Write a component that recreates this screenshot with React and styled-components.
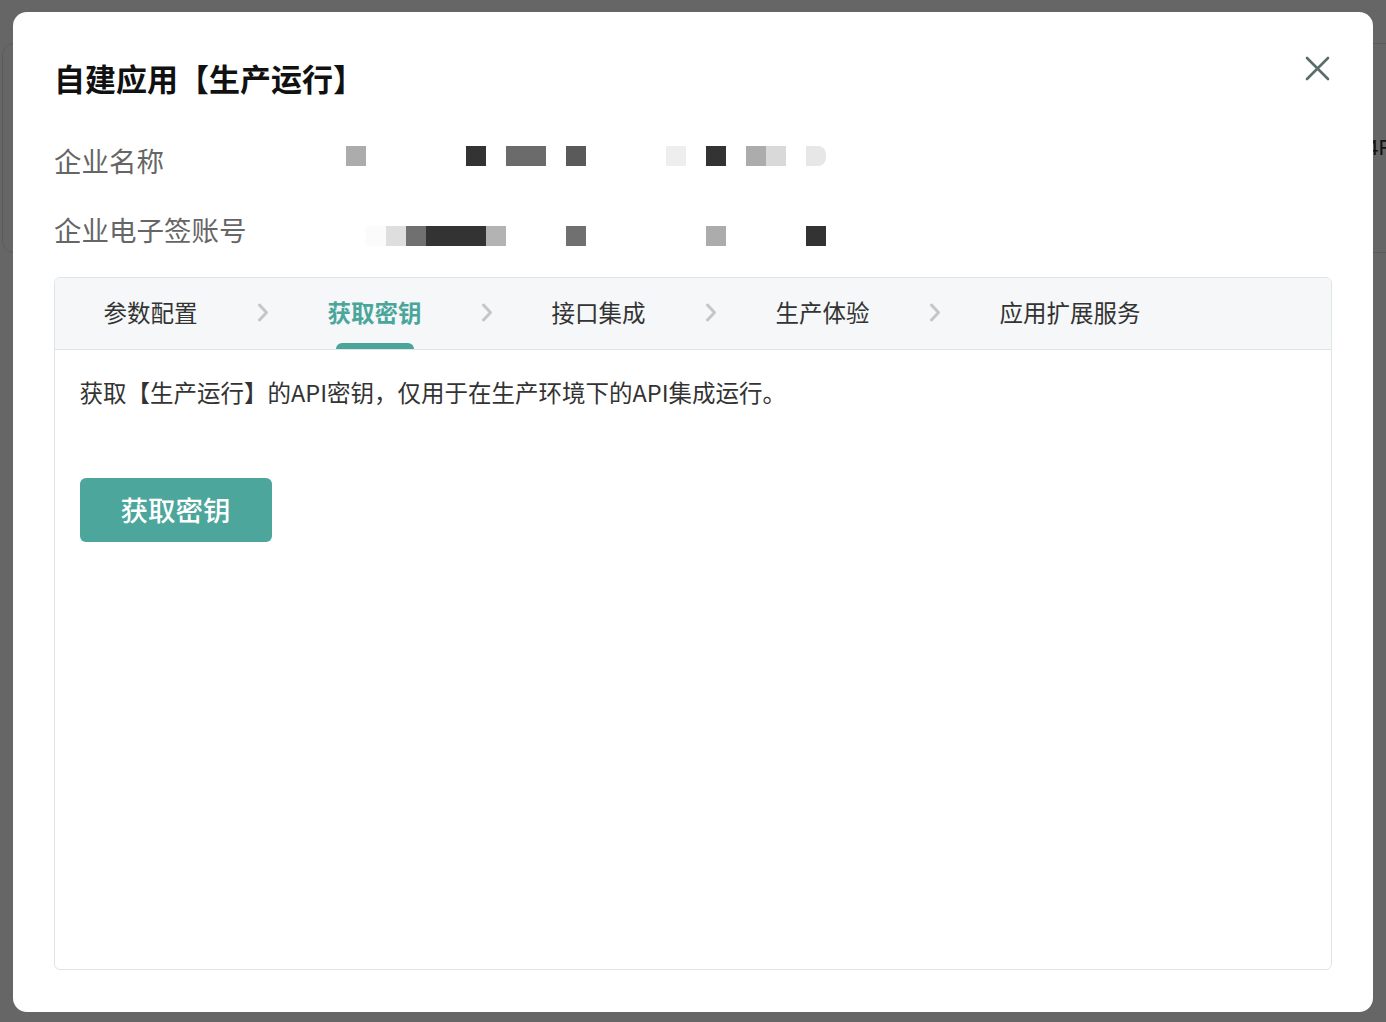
import React from 'react'
import styled, { createGlobalStyle } from 'styled-components'

const GlobalStyle = createGlobalStyle`
  html, body {
    margin: 0;
    padding: 0;
    background: #ffffff;
    font-family: "Noto Sans CJK SC", "Noto Sans", sans-serif;
  }
  * { box-sizing: border-box; }
`

const steps = ['参数配置', '获取密钥', '接口集成', '生产体验', '应用扩展服务']

const nameCells = [
    { col: 0, color: '#acacac' },
    { col: 6, color: '#333333' },
    { col: 8, color: '#6b6b6b' },
    { col: 9, color: '#6b6b6b' },
    { col: 11, color: '#5a5a5a' },
    { col: 16, color: '#eeeeee' },
    { col: 18, color: '#333333' },
    { col: 20, color: '#acacac' },
    { col: 21, color: '#d9d9d9' },
    { col: 23, color: '#e7e7e7', round: true },
]

const accountCells = [
    { col: 1, color: '#fbfbfb' },
    { col: 2, color: '#dedede' },
    { col: 3, color: '#707070' },
    { col: 4, color: '#333333' },
    { col: 5, color: '#333333' },
    { col: 6, color: '#333333' },
    { col: 7, color: '#b3b3b3' },
    { col: 11, color: '#707070' },
    { col: 18, color: '#acacac' },
    { col: 23, color: '#333333' },
]

function Mosaic({ cells, shift }) {
    return (
        <MosaicGrid $shift={shift}>
            {cells.map((c) => (
                <Cell key={c.col} $col={c.col} $color={c.color} $round={c.round} />
            ))}
        </MosaicGrid>
    )
}

function Chevron() {
    return (
        <svg width="12" height="19" viewBox="0 0 12 19" fill="none">
            <path d="M2.5 2 L9.5 9.5 L2.5 17" stroke="#c3c7c7" strokeWidth="3" strokeLinecap="round" strokeLinejoin="round" />
        </svg>
    )
}

function App() {
    return (
        <>
            <GlobalStyle />
            <BackPage>
                <BackCard>
                    <BackText>编号 5A4F</BackText>
                </BackCard>
            </BackPage>

            <Overlay>
                <Modal>
                    <Header>
                        <Title>自建应用【生产运行】</Title>
                        <CloseButton aria-label="关闭">
                            <svg width="25" height="25" viewBox="0 0 25 25" fill="none">
                                <path d="M2 2 L23 23 M23 2 L2 23" stroke="#5b6c69" strokeWidth="2.6" strokeLinecap="round" />
                            </svg>
                        </CloseButton>
                    </Header>

                    <InfoList>
                        <InfoRow>
                            <Label>企业名称</Label>
                            <Mosaic cells={nameCells} shift={-4} />
                        </InfoRow>
                        <InfoRow>
                            <Label>企业电子签账号</Label>
                            <Mosaic cells={accountCells} shift={7} />
                        </InfoRow>
                    </InfoList>

                    <Panel>
                        <StepBar>
                            {steps.map((s, i) => (
                                <React.Fragment key={s}>
                                    <Step $active={i === 1}>{s}</Step>
                                    {i < steps.length - 1 && (
                                        <Arrow>
                                            <Chevron />
                                        </Arrow>
                                    )}
                                </React.Fragment>
                            ))}
                        </StepBar>

                        <PanelBody>
                            <Description>
                                获取【生产运行】的API密钥，仅用于在生产环境下的API集成运行。
                            </Description>
                            <PrimaryButton>获取密钥</PrimaryButton>
                        </PanelBody>
                    </Panel>
                </Modal>
            </Overlay>
        </>
    )
}

export default App


const BackPage = styled.div`
    height: 100vh;
    padding: 43px 0 0 2px;
    overflow: hidden;
`

const BackCard = styled.div`
    width: calc(100vw + 20px);
    height: 210px;
    border: 1px solid #e4e4e4;
    border-radius: 12px;
    display: flex;
    justify-content: flex-end;
    align-items: center;
    padding-right: 15px;
`

const BackText = styled.span`
    font-family: "Liberation Sans", sans-serif;
    font-size: 22px;
    color: #333;
    white-space: nowrap;
`

const Overlay = styled.div`
    position: fixed;
    inset: 0;
    background: rgba(0, 0, 0, 0.6);
    display: flex;
    justify-content: center;
    align-items: flex-start;
    padding-top: 12px;
`

const Modal = styled.div`
    width: 1360px;
    height: 1000px;
    background: #ffffff;
    border-radius: 14px;
    padding: 44px 41px 42px 41px;
    display: flex;
    flex-direction: column;
`

const Header = styled.div`
    display: flex;
    justify-content: space-between;
    align-items: flex-start;
`

const Title = styled.h1`
    margin: 0;
    font-size: 31px;
    line-height: 44px;
    font-weight: 700;
    color: #111111;
`

const CloseButton = styled.button`
    margin: 0 2px 0 0;
    padding: 0;
    border: none;
    background: transparent;
    cursor: pointer;
    display: flex;
`

const InfoList = styled.div`
    margin-top: 38px;
    display: flex;
    flex-direction: column;
    gap: 25px;
`

const InfoRow = styled.div`
    display: flex;
    align-items: center;
    height: 44px;
`

const Label = styled.div`
    width: 292px;
    font-size: 27.5px;
    color: #666666;
    white-space: nowrap;
`

const MosaicGrid = styled.div`
    display: grid;
    grid-template-columns: repeat(24, 20px);
    grid-template-rows: 20px;
    transform: translateY(${(p) => p.$shift}px);
`

const Cell = styled.div`
    grid-column: ${(p) => p.$col + 1};
    grid-row: 1;
    background: ${(p) => p.$color};
    border-radius: ${(p) => (p.$round ? '0 8px 8px 0' : '0')};
`

const Panel = styled.div`
    margin-top: 26px;
    flex: 1;
    border: 1.5px solid #dfe5e4;
    border-radius: 6px;
    display: flex;
    flex-direction: column;
    overflow: hidden;
`

const StepBar = styled.div`
    height: 72px;
    background: #f5f7f8;
    border-bottom: 1.5px solid #dfe5e4;
    display: flex;
    align-items: stretch;
    padding-left: 48.5px;
`

const Step = styled.div`
    position: relative;
    display: flex;
    align-items: center;
    padding-bottom: 4px;
    font-size: 23.5px;
    font-weight: ${(p) => (p.$active ? 600 : 400)};
    color: ${(p) => (p.$active ? '#4aa69b' : '#333333')};
    white-space: nowrap;

    &::after {
        content: "";
        display: ${(p) => (p.$active ? 'block' : 'none')};
        position: absolute;
        left: 50%;
        bottom: 0;
        width: 78px;
        height: 6px;
        margin-left: -39px;
        border-radius: 6px 6px 0 0;
        background: #4aa69b;
    }
`

const Arrow = styled.div`
    width: 130px;
    display: flex;
    align-items: center;
    justify-content: center;
    padding-bottom: 2px;
`

const PanelBody = styled.div`
    padding: 24px 24.5px;
    display: flex;
    flex-direction: column;
    align-items: flex-start;
`

const Description = styled.p`
    margin: 0;
    font-size: 23.5px;
    line-height: 36px;
    color: #333333;
`

const PrimaryButton = styled.button`
    margin-top: 68px;
    width: 192px;
    height: 64px;
    padding-bottom: 3px;
    border: none;
    border-radius: 6px;
    background: #4ca69b;
    color: #ffffff;
    font-family: "Noto Sans CJK SC", sans-serif;
    font-size: 27.5px;
    font-weight: 500;
    cursor: pointer;

    &:hover {
        background: #43998e;
    }
`
